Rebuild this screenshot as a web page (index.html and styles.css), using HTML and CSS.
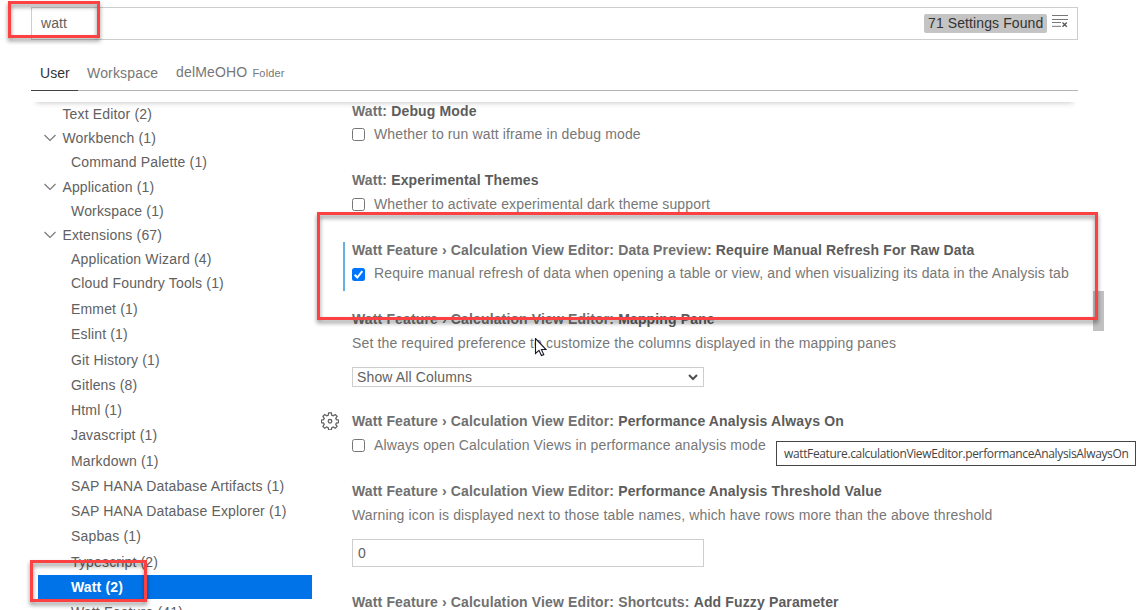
FILE: index.html
```html
<!DOCTYPE html>
<html lang="en">
<head>
<meta charset="utf-8">
<title>Settings</title>
<link rel="stylesheet" href="styles.css">
</head>
<body>
<div class="settings">
  <header class="search">
    <span class="search-text">watt</span>
    <span class="count">71 Settings Found</span>
    <svg class="clear-icon" width="17" height="14" viewBox="0 0 17 14"><path d="M0 1.500h16M0 5.500h16M0 8.500h9M0 12.300h9" stroke="#777" fill="none"/><path d="M10.500 8.500l4.300 4.300M14.800 8.500l-4.300 4.300" stroke="#555" stroke-width="1.300"/></svg>
  </header>
  <nav class="tabs">
    <span class="tab active">User</span>
    <span class="tab workspace">Workspace</span>
    <span class="tab folder">delMeOHO <small>Folder</small></span>
  </nav>
  <main class="body">
    <div class="scroll-shadow"></div>
    <aside class="toc">
      <div class="group top">
        <div class="row">Text Editor (2)</div>
        <div class="row"><svg class="chev" width="12" height="8" viewBox="0 0 12 8"><path d="M.5 1l5.500 5.500 5.500-5.500"/></svg>Workbench (1)</div>
        <div class="row sub">Command Palette (1)</div>
        <div class="row"><svg class="chev" width="12" height="8" viewBox="0 0 12 8"><path d="M.5 1l5.500 5.500 5.500-5.500"/></svg>Application (1)</div>
        <div class="row sub">Workspace (1)</div>
        <div class="row"><svg class="chev" width="12" height="8" viewBox="0 0 12 8"><path d="M.5 1l5.500 5.500 5.500-5.500"/></svg>Extensions (67)</div>
        <div class="row sub">Application Wizard (4)</div>
        <div class="row sub">Cloud Foundry Tools (1)</div>
      </div>
      <div class="group rest">
        <div class="row sub">Emmet (1)</div>
        <div class="row sub">Eslint (1)</div>
        <div class="row sub">Git History (1)</div>
        <div class="row sub">Gitlens (8)</div>
        <div class="row sub">Html (1)</div>
        <div class="row sub">Javascript (1)</div>
        <div class="row sub">Markdown (1)</div>
        <div class="row sub">SAP HANA Database Artifacts (1)</div>
        <div class="row sub">SAP HANA Database Explorer (1)</div>
        <div class="row sub">Sapbas (1)</div>
        <div class="row sub">Typescript (2)</div>
        <div class="row sub selected"><span>Watt (2)</span></div>
        <div class="row sub">Watt Feature (41)</div>
      </div>
    </aside>
    <section class="list">
      <article class="item debug">
        <h3>Watt: <b>Debug Mode</b></h3>
        <p><i class="box"></i><span>Whether to run watt iframe in debug mode</span></p>
      </article>
      <article class="item themes lower">
        <h3>Watt: <b>Experimental Themes</b></h3>
        <p><i class="box"></i><span>Whether to activate experimental dark theme support</span></p>
      </article>
      <article class="item refresh">
        <h3>Watt Feature › Calculation View Editor: Data Preview: <b>Require Manual Refresh For Raw Data</b></h3>
        <p><i class="box checked"><svg width="13" height="13" viewBox="0 0 13 13"><path d="M2.700 6.800l2.600 2.700 5-6.300" fill="none" stroke="#fff" stroke-width="2"/></svg></i><span>Require manual refresh of data when opening a table or view, and when visualizing its data in the Analysis tab</span></p>
      </article>
      <article class="item mapping lower">
        <h3>Watt Feature › Calculation View Editor: <b>Mapping Pane</b></h3>
        <p><span>Set the required preference to customize the columns displayed in the mapping panes</span></p>
        <div class="select">Show All Columns<svg width="10" height="7" viewBox="0 0 10 7"><path d="M1 1l4 4 4-4" fill="none" stroke="#505050" stroke-width="2"/></svg></div>
      </article>
      <article class="item always lower">
        <svg class="gear" width="18" height="18" viewBox="-10 -10 20 20"><path d="M-1.500-9h3l.5 2.600 1.600.7 2.200-1.500 2.100 2.100-1.500 2.200.7 1.400 2.500.4v3l-2.500.4-.7 1.500 1.500 2.200-2.100 2.100-2.200-1.500-1.600.7-.5 2.600h-3l-.5-2.600-1.600-.7-2.200 1.500-2.100-2.100 1.500-2.200-.7-1.500-2.500-.4v-3l2.500-.4.700-1.400-1.500-2.200 2.100-2.100 2.200 1.500 1.600-.7z"/><circle r="2" cy=".3"/></svg>
        <h3>Watt Feature › Calculation View Editor: <b>Performance Analysis Always On</b></h3>
        <p><i class="box"></i><span>Always open Calculation Views in performance analysis mode</span></p>
      </article>
      <article class="item threshold lower">
        <h3>Watt Feature › Calculation View Editor: <b>Performance Analysis Threshold Value</b></h3>
        <p><span>Warning icon is displayed next to those table names, which have rows more than the above threshold</span></p>
        <div class="input">0</div>
      </article>
      <article class="item">
        <h3>Watt Feature › Calculation View Editor: Shortcuts: <b>Add Fuzzy Parameter</b></h3>
      </article>
    </section>
  </main>
  <div class="thumb"></div>
  <div class="tooltip">wattFeature.calculationViewEditor.performanceAnalysisAlwaysOn</div>
  <div class="mark mark-search"></div>
  <div class="mark mark-setting"></div>
  <div class="mark mark-toc"></div>
  <svg class="cursor" width="14" height="21" viewBox="0 0 14 21"><path d="M1.500 .5v15l3.500-3.200 2.400 5.300 2.400-1-2.400-5.100h4.600z" fill="#fff" stroke="#181828" stroke-width="1.100"/></svg>
</div>
</body>
</html>
```
FILE: styles.css
```css
* { box-sizing: border-box; }
body { margin: 0; background: #fff; font: 14px/18px "Liberation Sans", Arial, sans-serif; color: #616161; }
.settings { position: relative; width: 1142px; height: 610px; padding: 7px 64px 0 31px; overflow: hidden; white-space: nowrap; }
.search { display: flex; align-items: center; height: 33px; border: 1px solid #cecece; padding: 0 8px 0 9px; }
.search-text { flex: 1; letter-spacing: .1px; margin-top: -1px; }
.count { background: #c4c4c4; color: #333; width: 123px; height: 19px; line-height: 19px; padding: 0 4px; border-radius: 2px; letter-spacing: .1px; }
.clear-icon { margin: -5px 0 0 5px; }
.tabs { display: flex; height: 51px; border-bottom: 1px solid #b5b5b5; line-height: 20px; padding-top: 23px; letter-spacing: .17px; color: #777; }
.tab.active { width: 47px; height: 28px; padding-left: 9px; color: #333; border-bottom: 1px solid #424242; letter-spacing: .05px; }
.tab.workspace { padding-left: 9px; width: 98px; }
.tab.folder { margin-top: -1px; }
.tab small { font-size: 11px; margin-left: 1px; }
.body { position: relative; display: flex; margin-top: 11px; }
.search, .tabs { width: 1047px; }
.scroll-shadow { position: absolute; left: 2px; top: 0; width: 1043px; height: 6px; overflow: hidden; }
.scroll-shadow::before { content: ""; position: absolute; left: 3px; right: 3px; top: -6px; height: 6px; box-shadow: 0 0 6px rgba(0,0,0,.28); }
.toc { position: relative; width: 281px; padding-left: 7px; letter-spacing: .165px; }
.row { display: flex; align-items: center; height: 24.2px; padding-left: 24.400px; position: relative; }
.rest { padding-top: .85px; }
.rest .row { height: 25.270px; }
.row.sub { padding-left: 33px; }
.chev { margin: 0 6px 0 -18px; fill: none; stroke: #757575; stroke-width: 1.100; }
.row.row.selected { padding-left: 0; }
.selected span { width: 274px; height: 24px; line-height: 24px; padding-left: 33px; background: #0073e9; color: #fff; font-weight: bold; letter-spacing: .16px; }
.list { position: relative; padding-left: 40px; flex: 1; }
.item { position: relative; height: 69px; }
h3, p { margin: 0; font-size: 14px; line-height: 18px; }
h3 { color: #707070; letter-spacing: .14px; }
h3 b { color: #5c5c5c; }
p { display: flex; margin-top: 5px; color: #777; letter-spacing: .133px; }
.lower p { margin-top: 6px; }
.box { width: 13px; height: 13px; margin: 4px 9px 0 0; border: 1px solid #767676; border-radius: 2.500px; flex: none; }
.lower .box, .debug .box { margin-top: 3px; }
.box.checked { border: 0; background: #0075ff; }
.box svg { display: block; }
.themes, .always { height: 70px; }
.mapping { height: 102px; }
.threshold { height: 111px; }
.refresh::before { content: ""; position: absolute; left: -9px; top: 1px; width: 2px; height: 49px; background: #66afe0; }
.select { display: flex; align-items: center; justify-content: space-between; width: 352px; height: 20px; margin-top: 15px; border: 1px solid #cecece; padding: 0 5px 0 4px; letter-spacing: .14px; }
.input { width: 352px; height: 28px; line-height: 26px; margin-top: 15px; border: 1px solid #cecece; padding-left: 5px; }
.gear { position: absolute; left: -31px; top: 0; fill: none; stroke: #616161; stroke-width: 1.400; }
.thumb { position: absolute; left: 1093px; top: 291px; width: 11px; height: 40px; background: #c1c1c1; }
.tooltip { position: absolute; left: 776px; top: 441px; width: 360px; height: 25px; border: 1px solid #454545; background: #fff; color: #444; font: 12px/24px "Open Sans", "Noto Sans", sans-serif; letter-spacing: -.36px; padding-left: 7px; }
.mark { position: absolute; border: 3px solid #fb4141; filter: drop-shadow(0 3px 2px rgba(0,0,0,.45)); }
.mark-search { left: 8px; top: 1px; width: 92px; height: 37px; }
.mark-setting { left: 317px; top: 212px; width: 781px; height: 108px; }
.mark-toc { left: 30px; top: 560px; width: 117px; height: 42px; }
.cursor { position: absolute; left: 534px; top: 338px; }
```
